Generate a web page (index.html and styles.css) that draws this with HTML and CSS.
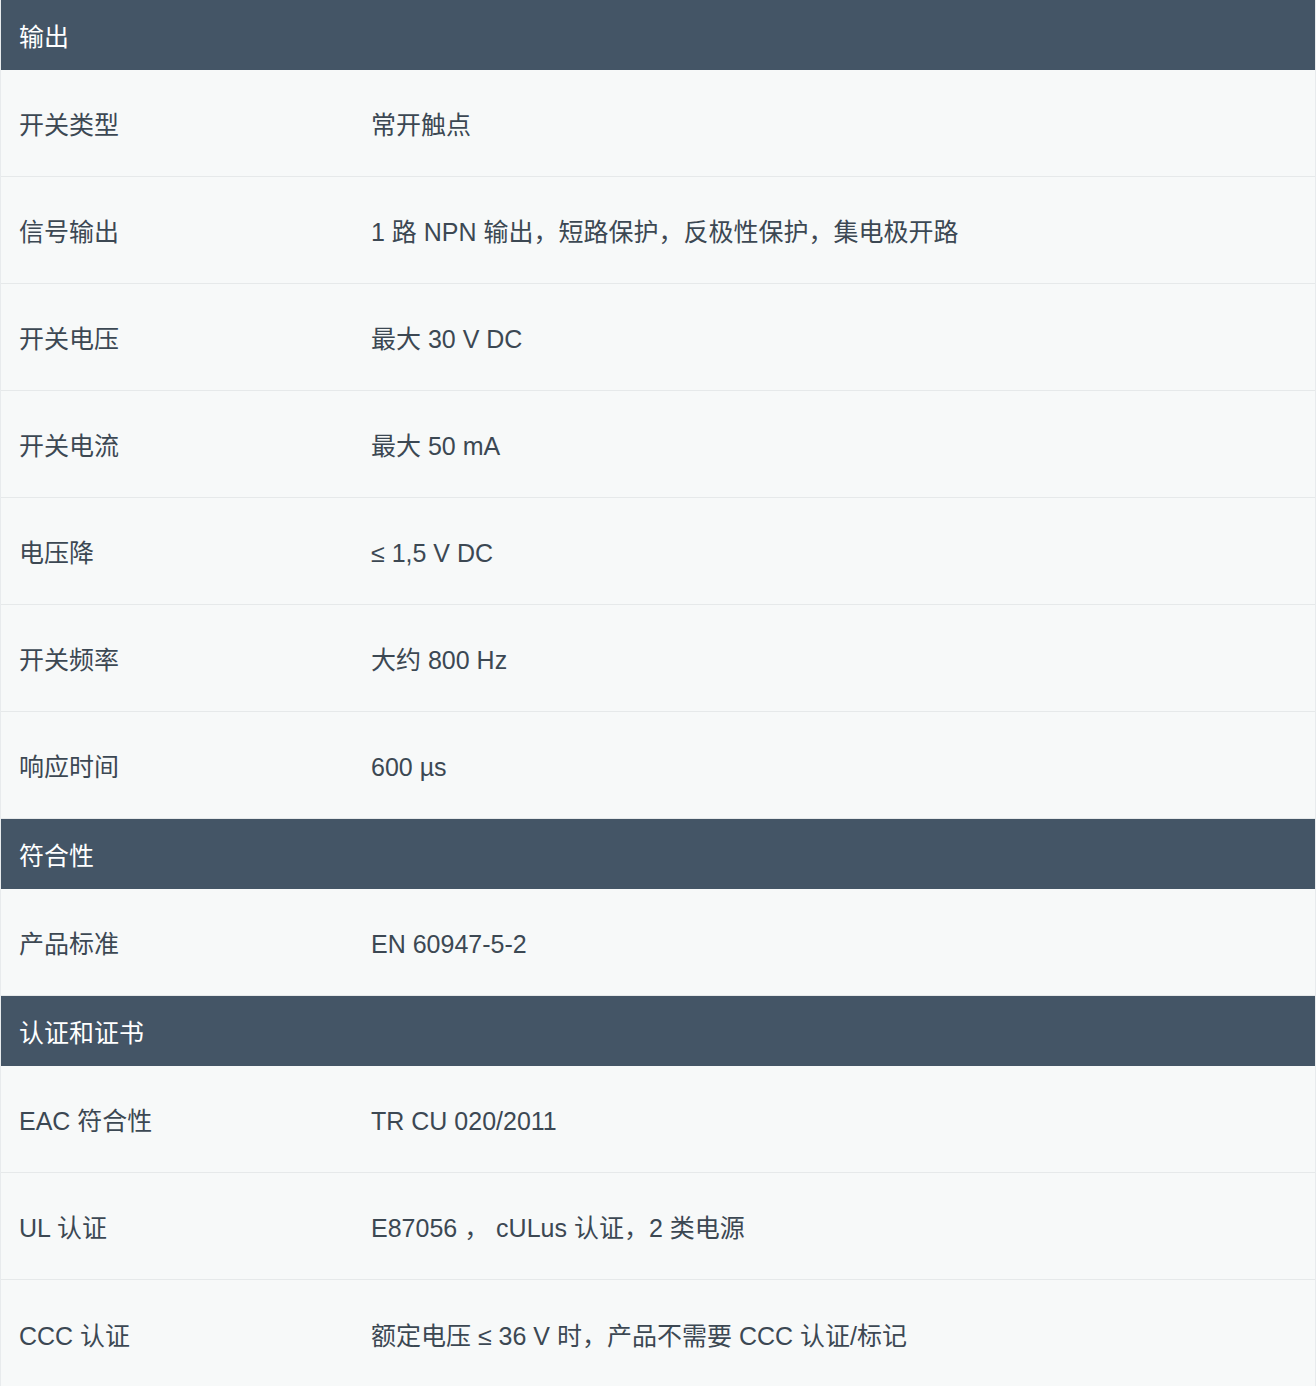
FILE: index.html
```html
<!DOCTYPE html>
<html lang="zh-CN">
<head>
<meta charset="utf-8">
<title>技术数据</title>
<link rel="stylesheet" href="styles.css">
</head>
<body>
<div class="spec">
  <div class="group">输出</div>
  <div class="row"><div class="label">开关类型</div><div class="value">常开触点</div></div>
  <div class="row"><div class="label">信号输出</div><div class="value">1 路 NPN 输出，短路保护，反极性保护，集电极开路</div></div>
  <div class="row"><div class="label">开关电压</div><div class="value">最大 30 V DC</div></div>
  <div class="row"><div class="label">开关电流</div><div class="value">最大 50 mA</div></div>
  <div class="row"><div class="label">电压降</div><div class="value">≤ 1,5 V DC</div></div>
  <div class="row"><div class="label">开关频率</div><div class="value">大约 800 Hz</div></div>
  <div class="row"><div class="label">响应时间</div><div class="value">600 µs</div></div>

  <div class="group">符合性</div>
  <div class="row"><div class="label">产品标准</div><div class="value">EN 60947-5-2</div></div>

  <div class="group">认证和证书</div>
  <div class="row"><div class="label">EAC 符合性</div><div class="value">TR CU 020/2011</div></div>
  <div class="row"><div class="label">UL 认证</div><div class="value">E87056 ， cULus 认证，2 类电源</div></div>
  <div class="row last"><div class="label">CCC 认证</div><div class="value">额定电压 ≤ 36 V 时，产品不需要 CCC 认证/标记</div></div>
</div>
</body>
</html>
```

FILE: styles.css
```css
body {
	margin: 0;
	background: #fff;
	font-family: "Liberation Sans", Arial, "Noto Sans CJK SC", sans-serif;
	font-size: 25px;
	line-height: 30px;
	color: #3c4853;
}
.spec {
	width: 1316px;
	border-left: 1px solid #e8ebed;
	border-right: 1px solid #e8ebed;
	box-sizing: border-box;
}
.group {
	height: 70px;
	display: flex;
	align-items: center;
	padding: 4px 18px 0;
	box-sizing: border-box;
	background: #445566;
	color: #fff;
}
.row {
	display: grid;
	grid-template-columns: 352px 1fr;
	height: 107px;
	box-sizing: border-box;
	align-items: center;
	background: #f7f9f9;
	border-bottom: 1px solid #e6e9ea;
}
.row.last {
	border-bottom: none;
}
.label, .value {
	padding: 4px 18px 0;
}
```
